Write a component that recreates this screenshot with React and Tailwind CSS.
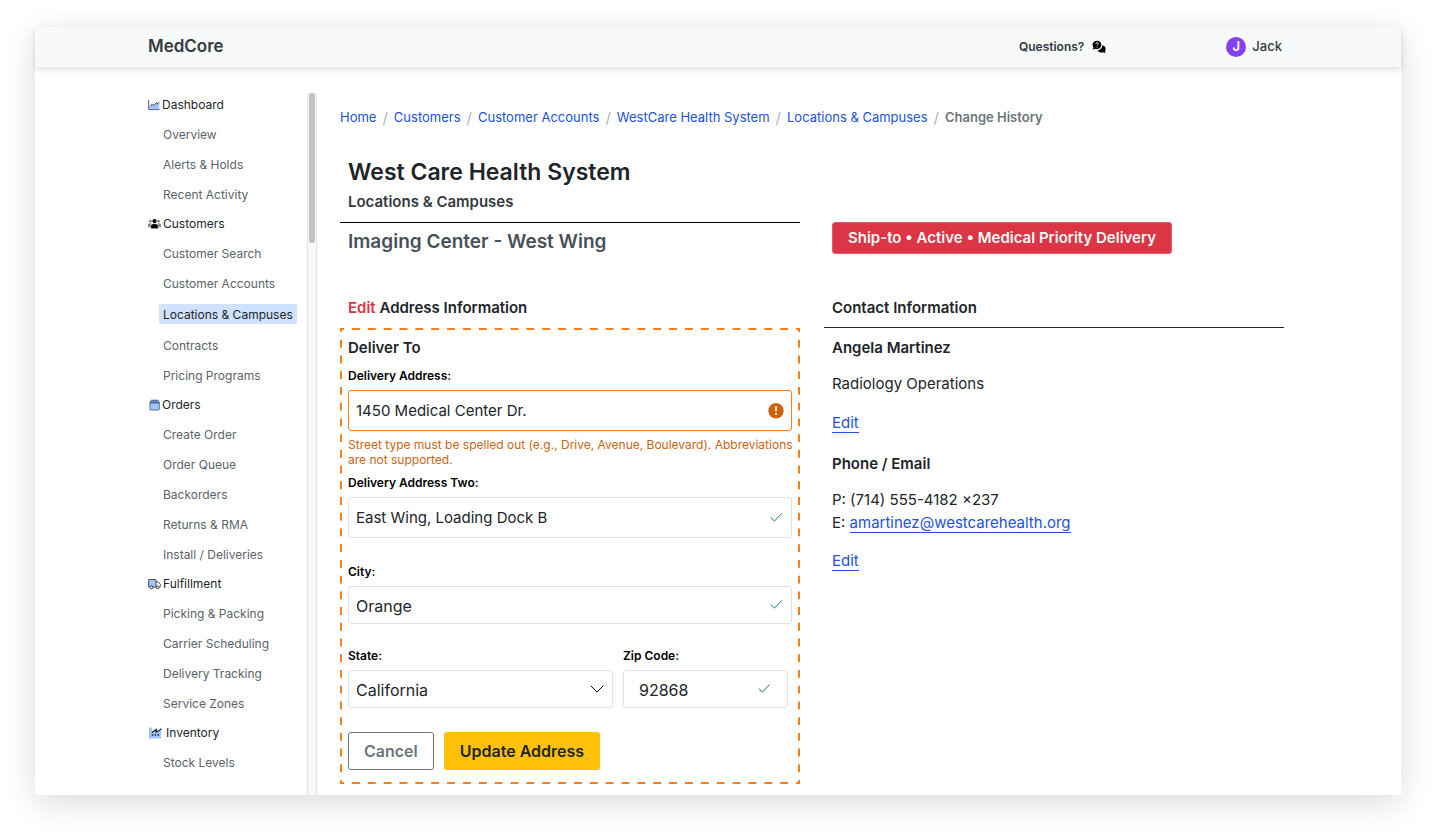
import React from "react";

const icons = {
  dashboard: (
    <svg viewBox="0 0 12 12" className="h-3 w-3" fill="none" aria-hidden="true">
      <path d="M1.200 10V7.800L4 5.200l2.100 1.800 2.400-3.200 1.200 1L11.300 3.400V10z" fill="#9ec5fe" />
      <path d="M2 7.400l2.300-2.300 1.800 1.500 2.400-3.100 1.200 1.100 1.700-1.500" stroke="#343a40" strokeWidth="1" />
      <path d="M0.600 1v9.600h11" stroke="#52657f" strokeWidth="1" />
    </svg>
  ),
  customers: (
    <svg viewBox="0 0 14 12" className="h-3 w-[13px]" aria-hidden="true">
      <g fill="#8a8a8a">
        <circle cx="2.600" cy="3" r="1.500" />
        <circle cx="11.400" cy="3" r="1.500" />
        <path d="M0 9.400V7.200C0 6 .9 5.200 2.200 5.200h1v4.200zM14 9.400V7.200c0-1.200-.9-2-2.200-2h-1v4.200z" />
      </g>
      <circle cx="7" cy="2.900" r="2.300" fill="#000" />
      <path d="M3 11V8.600c0-1.700 1.200-2.800 2.900-2.800h2.200c1.700 0 2.900 1.100 2.900 2.800V11z" fill="#000" stroke="#fff" strokeWidth="0.500" />
    </svg>
  ),
  orders: (
    <svg viewBox="0 0 12 12" className="h-3 w-3" fill="none" aria-hidden="true">
      <path d="M2 3.800h9.300v6.300q0 .9-.9.900H2.900q-.9 0-.9-.9z" fill="#9ec5fe" stroke="#52657f" strokeWidth="0.900" />
      <path d="M2 3.800l.8-2q.2-.6.8-.6h6.100q.6 0 .8.600l.8 2z" fill="#7aa7ea" stroke="#3e5270" strokeWidth="0.900" />
      <path d="M5.400 1.200v1.800M7.900 1.200v1.800" stroke="#3e5270" strokeWidth="0.800" />
    </svg>
  ),
  fulfillment: (
    <svg viewBox="0 0 14 12" className="h-3 w-[13px]" fill="none" aria-hidden="true">
      <path d="M.700 1.300h8v8H.700z" fill="#9ec5fe" />
      <path d="M2 9.300H1.300q-.8 0-.8-.8V2q0-.8.800-.8h6.600q.8 0 .8.800v7.300H5.200M8.700 3.700h2.100q.5 0 .8.500l1.700 2.300v2.100q0 .7-.7.700h-.4" stroke="#33415c" strokeWidth="1" />
      <circle cx="3.600" cy="9.600" r="1.500" fill="#fff" stroke="#222" strokeWidth="1" />
      <circle cx="10.400" cy="9.600" r="1.500" fill="#fff" stroke="#222" strokeWidth="1" />
    </svg>
  ),
  inventory: (
    <svg viewBox="0 0 16 12" className="h-3 w-4" fill="none" aria-hidden="true">
      <path d="M1 .5h3v4.200L8.300 2.200v2.500l4.800-2.500v9.300H1z" fill="#9ec5fe" />
      <path d="M4 5.400L8.300 2.500v2.700l5.300-3.400" stroke="#1b1f24" strokeWidth="1.200" />
      <path d="M3.700 7.200h1.500v1.500H3.700zM6.600 7.200h1.500v1.500H6.600zM9.500 7.200H11v1.500H9.500z" fill="#1b1f24" />
    </svg>
  ),
};

const groups = [
  { name: "Dashboard", icon: "dashboard", items: ["Overview", "Alerts & Holds", "Recent Activity"] },
  {
    name: "Customers",
    icon: "customers",
    items: ["Customer Search", "Customer Accounts", "Locations & Campuses", "Contracts", "Pricing Programs"],
  },
  {
    name: "Orders",
    icon: "orders",
    items: ["Create Order", "Order Queue", "Backorders", "Returns & RMA", "Install / Deliveries"],
  },
  {
    name: "Fulfillment",
    icon: "fulfillment",
    items: ["Picking & Packing", "Carrier Scheduling", "Delivery Tracking", "Service Zones"],
  },
  { name: "Inventory", icon: "inventory", items: ["Stock Levels"] },
];

const crumbs = ["Home", "Customers", "Customer Accounts", "WestCare Health System", "Locations & Campuses"];

function Header() {
  return (
    <header className="relative flex h-10 items-center bg-[#f8f9fa] pr-[119px] pl-[113px] shadow-[0_3px_6px_rgba(0,0,0,0.12)]">
      <a href="#" className="text-[17px] font-semibold text-[#343a40]">
        MedCore
      </a>
      <div className="ml-auto flex items-center gap-[120px]">
        <button type="button" className="flex items-center gap-2 text-xs font-semibold text-[#343a40]">
          Questions?
          <svg viewBox="0 0 14 14" className="h-3.5 w-3.5" aria-hidden="true">
            <path
              d="M5 .8C2.500.8.6 2.500.6 4.800c0 .9.300 1.700.8 2.400L.6 9.500l2.600-.7c.5.2 1.100.3 1.800.3 2.400 0 4.300-1.900 4.300-4.300S7.400.8 5 .8z"
              fill="#000"
            />
            <path
              d="M10.300 5.300c0 2.700-2 4.700-4.600 4.900.7 1.500 2.100 2.300 3.800 2.300.7 0 1.200-.1 1.700-.3l2.400.9-.6-2.200c.4-.6.6-1.200.6-2 0-1.800-1.300-3.200-3.300-3.600z"
              fill="#000"
            />
            <path d="M3.700 3.800c0-.8.6-1.200 1.300-1.200s1.300.5 1.300 1.100c0 .8-1.200.9-1.200 1.800" fill="none" stroke="#fff" strokeWidth="0.9" />
            <circle cx="5.100" cy="7" r="0.600" fill="#fff" />
          </svg>
        </button>
        <button type="button" className="flex items-center gap-1.5 text-[13px] font-medium text-[#343a40]">
          <span className="flex h-5 w-5 items-center justify-center rounded-full bg-[#8540f5] font-semibold text-white">
            J
          </span>
          Jack
        </button>
      </div>
    </header>
  );
}

function Sidebar() {
  return (
    <div className="flex w-[169px] shrink-0">
      <nav className="min-w-0 flex-1 text-xs" aria-label="Sections">
        {groups.map((group) => (
          <section key={group.name}>
            <h2 className="flex h-[29px] items-center gap-0.5 text-[#212529]">
              {icons[group.icon]}
              {group.name}
            </h2>
            <ul>
              {group.items.map((item) =>
                item === "Locations & Campuses" ? (
                  <li key={item} className="flex h-8 items-center pl-[11px]">
                    <a
                      href="#"
                      aria-current="page"
                      className="rounded-xs bg-[#cfe2ff] px-1 pt-[3px] pb-px leading-4 whitespace-nowrap text-[#212529]"
                    >
                      {item}
                    </a>
                  </li>
                ) : (
                  <li key={item} className="flex h-[30px] items-center pt-0.5 pl-[15px]">
                    <a href="#" className="text-[#5c636a]">
                      {item}
                    </a>
                  </li>
                )
              )}
            </ul>
          </section>
        ))}
      </nav>
      <div className="mt-[3px] w-2.5 border-x border-[#e3e5e8] bg-[#f8f8f8]">
        <div className="mx-px h-[150px] rounded-full bg-[#c1c1c1]" />
      </div>
    </div>
  );
}

function DashedFrame() {
  const line = { stroke: "#fd7e14", strokeWidth: 4, pathLength: 464, strokeDasharray: "8 8", strokeDashoffset: 4 };
  return (
    <svg className="pointer-events-none absolute inset-0 h-full w-full" aria-hidden="true">
      <line x1="0" y1="0" x2="100%" y2="0" {...line} />
      <line x1="0" y1="100%" x2="100%" y2="100%" {...line} />
      <line x1="0" y1="0" x2="0" y2="100%" {...line} />
      <line x1="100%" y1="0" x2="100%" y2="100%" {...line} />
    </svg>
  );
}

function Check() {
  return (
    <svg viewBox="0 0 14 14" className="h-3.5 w-3.5 shrink-0" fill="none" stroke="#198754" aria-hidden="true">
      <path d="M.700 6.500l3.800 3.500L11.700 2.400" />
    </svg>
  );
}

const box = "mt-1.5 flex items-center rounded-[3px] border bg-white px-[7px]";
const labelText = "block text-xs leading-4 font-semibold text-black";
const inputText = "min-w-0 flex-1 bg-transparent pt-0.5 text-[#212529] outline-none";
const headingText = "text-[15px] leading-6 font-semibold text-[#212529]";

function AddressForm() {
  return (
    <form className="relative px-2 pt-2 pb-3.5" onSubmit={(e) => e.preventDefault()}>
      <DashedFrame />
      <h3 className={headingText}>Deliver To</h3>
      <label htmlFor="address1" className={`${labelText} mt-2`}>
        Delivery Address:
      </label>
      <div className={`${box} h-[41px] border-[#fd7e14] shadow-xs`}>
        <input
          id="address1"
          className={`${inputText} text-[15px]`}
          defaultValue="1450 Medical Center Dr."
          aria-describedby="address1-help"
        />
        <svg viewBox="0 0 16 16" className="h-4 w-4 shrink-0" aria-hidden="true">
          <circle cx="8" cy="7.700" r="7.700" fill="#ca6510" />
          <path d="M7 3.500h2l-.35 5h-1.300z" fill="#fff" />
          <circle cx="8" cy="10.900" r="1" fill="#fff" />
        </svg>
      </div>
      <p id="address1-help" className="mt-1.5 -mr-1 text-xs leading-[15px] text-[#ca6510]">
        Street type must be spelled out (e.g., Drive, Avenue, Boulevard). Abbreviations are not supported.
      </p>
      <label htmlFor="address2" className={`${labelText} mt-2`}>
        Delivery Address Two:
      </label>
      <div className={`${box} h-[41px] border-[#dee2e6]`}>
        <input id="address2" className={`${inputText} text-[15px]`} defaultValue="East Wing, Loading Dock B" />
        <Check />
      </div>
      <label htmlFor="city" className={`${labelText} mt-[26px]`}>
        City:
      </label>
      <div className={`${box} h-[38px] border-[#dee2e6]`}>
        <input id="city" className={`${inputText} text-base`} defaultValue="Orange" />
        <Check />
      </div>
      <div className="mt-6 flex gap-2.5 pr-1">
        <div className="min-w-0 flex-[265]">
          <label htmlFor="state" className={labelText}>
            State:
          </label>
          <div className={`${box} h-[38px] border-[#dee2e6]`}>
            <select id="state" className={`${inputText} appearance-none text-base`} defaultValue="California">
              <option>California</option>
            </select>
            <svg viewBox="0 0 16 16" className="h-4 w-4 shrink-0" fill="none" stroke="#000" strokeLinecap="round" aria-hidden="true">
              <path d="M2 5l6 6 6-6" />
            </svg>
          </div>
        </div>
        <div className="min-w-0 flex-[165]">
          <label htmlFor="zip" className={labelText}>
            Zip Code:
          </label>
          <div className={`${box} h-[38px] border-[#dee2e6]`}>
            <input id="zip" className={`${inputText} pl-2 text-base`} defaultValue="92868" />
            <span className="pr-2">
              <Check />
            </span>
          </div>
        </div>
      </div>
      <div className="mt-6 flex gap-2.5 text-base font-semibold">
        <button type="button" className="h-[38px] rounded-[3px] border border-[#6c757d] px-[15px] text-[#6c757d]">
          Cancel
        </button>
        <button type="submit" className="h-[38px] rounded-[3px] bg-[#ffc107] px-4 text-[#212529]">
          Update Address
        </button>
      </div>
    </form>
  );
}

function Contact() {
  const link = "border-b border-[#2251dc] leading-[18px] text-[#2251dc]";
  return (
    <div className="px-2 text-[15px] text-[#212529]">
      <h3 className={`mt-2 ${headingText}`}>Angela Martinez</h3>
      <p className="mt-3 leading-6">Radiology Operations</p>
      <p className="mt-[15px] leading-6">
        <a href="#" className={link}>
          Edit
        </a>
      </p>
      <h3 className={`mt-[17px] ${headingText}`}>Phone / Email</h3>
      <p className="mt-3 leading-[23px]">P: (714) 555-4182 ×237</p>
      <p className="leading-[23px]">
        E:{" "}
        <a href="mailto:amartinez@westcarehealth.org" className={link}>
          amartinez@westcarehealth.org
        </a>
      </p>
      <p className="mt-[15px] leading-6">
        <a href="#" className={link}>
          Edit
        </a>
      </p>
    </div>
  );
}

export default function App() {
  return (
    <div className="min-h-screen bg-white px-[35px] pt-[27px] pb-[43px] font-['Inter',sans-serif]">
      <div className="bg-white shadow-[0_8px_32px_rgba(0,0,0,0.14)]">
        <Header />
        <div className="flex gap-[23px] pt-[23px] pr-[117px] pl-[113px]">
          <Sidebar />
          <main className="min-w-0 flex-1 pt-[18px] pb-[11px]">
            <nav aria-label="Breadcrumb">
              <ol className="flex h-5 items-center text-[13px] whitespace-nowrap">
                {crumbs.map((crumb) => (
                  <li key={crumb} className="flex items-center">
                    <a href="#" className="text-[#2251dc]">
                      {crumb}
                    </a>
                    <span className="px-1.5 text-[15px] text-[#adb5bd]">/</span>
                  </li>
                ))}
                <li className="font-semibold text-[#6c757d]" aria-current="page">
                  Change History
                </li>
              </ol>
            </nav>
            <div className="mt-7 grid grid-cols-2 items-end gap-x-6">
              <div>
                <div className="border-b border-black px-2 pb-2">
                  <h1 className="text-[23px] leading-8 font-semibold text-[#212529]">West Care Health System</h1>
                  <p className="mt-0.5 text-[15px] leading-6 font-semibold text-[#343a40]">Locations &amp; Campuses</p>
                </div>
                <p className="mt-[5px] px-2 text-[19px] leading-7 font-semibold text-[#495057]">
                  Imaging Center - West Wing
                </p>
              </div>
              <div className="px-2 pb-0.5">
                <p className="inline-block rounded-[3px] border border-[#e35d6a] bg-[#dc3545] px-[15px] py-[3px] align-bottom text-[15px] leading-6 font-semibold whitespace-nowrap text-[#f8f9fa]">
                  Ship-to • Active • Medical Priority Delivery
                </p>
              </div>
            </div>
            <div className="mt-10 grid grid-cols-2 gap-x-6">
              <section>
                <h2 className={`px-2 pb-2 ${headingText}`}>
                  <span className="text-[#dc3545]">Edit</span> Address Information
                </h2>
                <AddressForm />
              </section>
              <section>
                <h2 className={`border-b border-[#212529] px-2 pb-[7px] ${headingText}`}>
                  Contact Information
                </h2>
                <Contact />
              </section>
            </div>
          </main>
        </div>
      </div>
    </div>
  );
}
